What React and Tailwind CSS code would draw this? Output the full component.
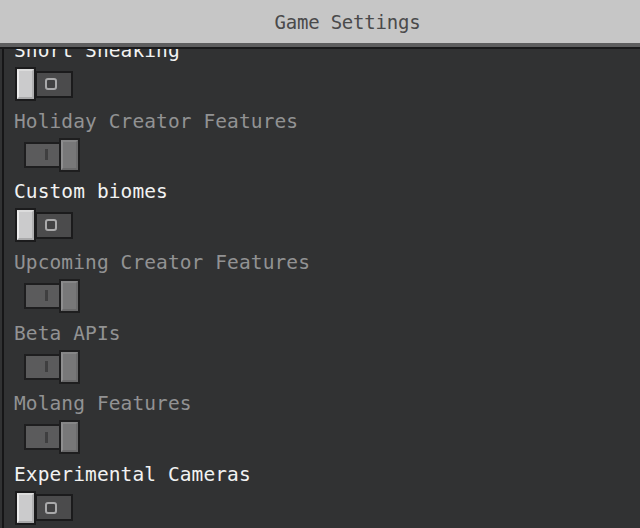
import React from "react";

const rows = [
  { label: "Short Sneaking", enabled: true, on: false },
  { label: "Holiday Creator Features", enabled: false, on: true },
  { label: "Custom biomes", enabled: true, on: false },
  { label: "Upcoming Creator Features", enabled: false, on: true },
  { label: "Beta APIs", enabled: false, on: true },
  { label: "Molang Features", enabled: false, on: true },
  { label: "Experimental Cameras", enabled: true, on: false },
];

function OffToggle() {
  return (
    <div className="flex h-[34px] items-center ml-[15px]">
      <div className="relative z-10 h-[34px] w-[21px] border-2 border-[#1b1b1c] bg-[#cbcbcc]">
        <div className="h-full w-full border-l-2 border-t-2 border-r-2 border-b-2 border-l-[#ececec] border-t-[#dcdcdc] border-r-[#b0b0b1] border-b-[#a9a9aa]" />
      </div>
      <div className="-ml-[1px] flex h-[27px] w-[38px] items-center border-2 border-[#1b1b1c] bg-[#4b4b4c] pl-[8px]">
        <div className="h-[12px] w-[12px] rounded-[3px] border-2 border-[#a9a9aa] bg-[#414142]" />
      </div>
    </div>
  );
}

function OnToggle() {
  return (
    <div className="flex h-[34px] items-center ml-[24px]">
      <div className="flex h-[26px] w-[37px] items-center border-2 border-[#1e1e1f] bg-[#5b5b5c] pl-[19px]">
        <div className="h-[11px] w-[3px] bg-[#3f3f40]" />
      </div>
      <div className="-ml-[2px] h-[34px] w-[21px] border-2 border-[#1e1e1f] bg-[#787879]">
        <div className="h-full w-full border-l-2 border-t-2 border-r-2 border-b-2 border-l-[#8e8e8f] border-t-[#868687] border-r-[#6c6c6d] border-b-[#69696a]" />
      </div>
    </div>
  );
}

export default function App() {
  return (
    <div
      className="flex h-[528px] w-[640px] flex-col overflow-hidden bg-[#313233]"
      style={{ fontFamily: '"DejaVu Sans Mono", "Liberation Mono", monospace' }}
    >
      <div className="flex h-[43px] shrink-0 items-center justify-center bg-[#c6c6c6] pl-[55px] text-[19px] leading-[20px] tracking-[-0.2px] text-[#4a4a4b]">
        Game Settings
      </div>
      <div className="h-[4px] shrink-0 bg-[#5e5e5f]" />
      <div className="h-[2px] shrink-0 bg-[#1a1a1b]" />
      <div className="relative flex-1 overflow-hidden">
        <div className="absolute left-[2px] top-0 h-full w-[1.5px] bg-[#161617]" />
        <div className="-mt-[8px] flex flex-col">
          {rows.map((r) => (
            <div key={r.label} className="flex h-[70.67px] shrink-0 flex-col">
              <div
                className={
                  "pl-[14px] text-[19.5px] leading-[20px] tracking-[0.1px] whitespace-nowrap " +
                  (r.enabled ? "text-[#f2f2f2]" : "text-[#929293]")
                }
              >
                {r.label}
              </div>
              <div className="mt-[6px]">{r.on ? <OnToggle /> : <OffToggle />}</div>
            </div>
          ))}
        </div>
      </div>
    </div>
  );
}
